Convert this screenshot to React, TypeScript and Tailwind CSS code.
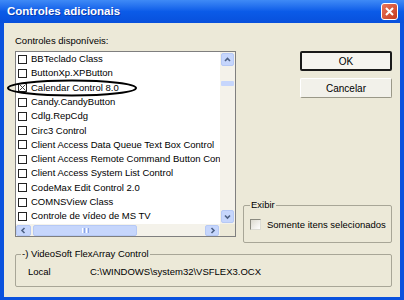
import { useState } from 'react';

const controls = [
  'BBTeclado Class',
  'ButtonXp.XPButton',
  'Calendar Control 8.0',
  'Candy.CandyButton',
  'Cdlg.RepCdg',
  'Circ3 Control',
  'Client Access Data Queue Text Box Control',
  'Client Access Remote Command Button Control',
  'Client Access System List Control',
  'CodeMax Edit Control 2.0',
  'COMNSView Class',
  'Controle de vídeo de MS TV',
];

function ListCheck({ checked }: { checked: boolean }) {
  return (
    <span className="w-[9px] h-[9px] border border-[#222] bg-white flex-shrink-0 flex items-center justify-center">
      {checked && (
        <svg width="7" height="7" viewBox="0 0 7 7">
          <path d="M0.5 0.5 L6.5 6.5 M6.5 0.5 L0.5 6.5" stroke="#444" strokeWidth="1" />
        </svg>
      )}
    </span>
  );
}

function Chevron({ dir }: { dir: 'up' | 'down' | 'left' | 'right' }) {
  const paths = {
    up: 'M2 6 L4.5 3.5 L7 6',
    down: 'M2 3.5 L4.5 6 L7 3.5',
    left: 'M5.5 2 L3 4.5 L5.5 7',
    right: 'M3.5 2 L6 4.5 L3.5 7',
  };
  return (
    <svg width="9" height="9" viewBox="0 0 9 9">
      <path d={paths[dir]} fill="none" stroke="#4d6185" strokeWidth="1.6" />
    </svg>
  );
}

function ScrollBtn({ dir, className }: { dir: 'up' | 'down' | 'left' | 'right'; className: string }) {
  return (
    <div className={`bg-[#c6d6fc] border border-[#b6c9f5] rounded-[2px] flex items-center justify-center ${className}`}>
      <Chevron dir={dir} />
    </div>
  );
}

export default function App() {
  const [onlySelected, setOnlySelected] = useState(false);

  return (
    <div className="w-[404px] h-[300px] bg-[#0a52de] flex flex-col font-['Liberation_Sans',Arial,sans-serif] text-[9.5px] text-black select-none">
      {/* Title bar */}
      <div className="h-[23px] flex items-center pl-[7px] pr-[6px] bg-gradient-to-b from-[#3f8af6] via-[#0b5be8] to-[#0850dc]">
        <span className="text-white font-bold text-[11.5px] [text-shadow:1px_1px_0_#0a3cb0]">Controles adicionais</span>
        <div className="ml-auto w-[17px] h-[17px] rounded-[3px] border border-white bg-gradient-to-br from-[#e9745a] to-[#c63a1c] flex items-center justify-center">
          <svg width="9" height="9" viewBox="0 0 9 9">
            <path d="M1 1 L8 8 M8 1 L1 8" stroke="white" strokeWidth="2" />
          </svg>
        </div>
      </div>

      {/* Dialog body */}
      <div className="flex-1 mx-[4px] mb-[3px] bg-[#ece9d8] pl-[11px] pr-[8px] pt-[11px] flex flex-col">
        <div className="flex relative">
          {/* Left: available controls */}
          <div className="w-[221px] flex flex-col">
            <div className="h-[14px] leading-[14px]">Controles disponíveis:</div>
            <div className="mt-[3px] h-[186px] border border-[#7f7f7f] bg-white flex flex-col">
              <div className="h-[172px] flex">
                <div className="flex-1 overflow-hidden">
                  {controls.map((name, i) => (
                    <div key={i} className="h-[14.3px] flex items-center gap-[4px] pl-[2px] whitespace-nowrap">
                      <ListCheck checked={i === 2} />
                      <span>{name}</span>
                    </div>
                  ))}
                </div>
                <div className="w-[15px] bg-[#f4f2ea] flex flex-col items-center pt-[1px] pb-[1px]">
                  <ScrollBtn dir="up" className="w-[13px] h-[13px]" />
                  <div className="mt-[15px] w-[13px] h-[5px] bg-[#c6d6fc] rounded-[1px]" />
                  <ScrollBtn dir="down" className="mt-auto w-[13px] h-[13px]" />
                </div>
              </div>
              <div className="flex-1 flex">
                <div className="flex-1 flex items-center bg-[#f4f2ea]">
                  <ScrollBtn dir="left" className="w-[15px] h-[11px]" />
                  <div className="ml-[2px] w-[104px] h-[11px] bg-[#c6d6fc] rounded-[2px] border border-[#b6c9f5] flex items-center justify-center gap-[1px]">
                    <span className="w-[1px] h-[5px] bg-white" />
                    <span className="w-[1px] h-[5px] bg-[#8aa4e8]" />
                    <span className="w-[1px] h-[5px] bg-white" />
                    <span className="w-[1px] h-[5px] bg-[#8aa4e8]" />
                  </div>
                  <ScrollBtn dir="right" className="ml-auto mr-[1px] w-[14px] h-[11px]" />
                </div>
                <div className="w-[15px] bg-[#ece9d8]" />
              </div>
            </div>
          </div>

          {/* Right: buttons and filter */}
          <div className="flex-1 ml-[7px] flex flex-col">
            <button className="self-end mt-[17px] w-[92px] h-[20px] border-2 border-[#1a1a1a] bg-[#f5f4ef] rounded-[2px] text-[10px]">
              OK
            </button>
            <button className="self-end mt-[7px] w-[92px] h-[20px] border border-white border-r-[#9a9888] border-b-[#9a9888] bg-[#f2f1ea] rounded-[2px] text-[10px]">
              Cancelar
            </button>
            <div className="relative mt-[107px] h-[38px] border border-[#a8a697] rounded-[2px] pl-[6px] pt-[13px] flex items-start">
              <span className="absolute -top-[7px] left-[6px] px-[1px] bg-[#ece9d8] leading-[12px]">Exibir</span>
              <label className="flex items-center gap-[6px]">
                <input
                  type="checkbox"
                  checked={onlySelected}
                  onChange={(e) => setOnlySelected(e.target.checked)}
                  className="appearance-none w-[11px] h-[11px] border border-[#dcdcd4] border-t-[#8a8a80] border-l-[#8a8a80] bg-gradient-to-br from-[#dcdad0] to-white"
                />
                <span className="leading-[11px]">Somente itens selecionados</span>
              </label>
            </div>
          </div>

          {/* Hand-drawn ellipse highlight */}
          <svg className="absolute left-[-9px] top-[45px] pointer-events-none" width="132" height="18" viewBox="0 0 132 18">
            <ellipse cx="66" cy="9" rx="64" ry="7.5" fill="none" stroke="black" strokeWidth="2" />
          </svg>
        </div>

        {/* Selected control details */}
        <div className="relative mt-[11px] h-[33px] border border-[#a8a697] rounded-[2px] pl-[12px] pt-[10px] flex">
          <span className="absolute -top-[7px] left-[5px] px-[1px] bg-[#ece9d8] leading-[12px]">-) VideoSoft FlexArray Control</span>
          <span className="w-[62px] leading-[14px]">Local</span>
          <span className="leading-[14px]">C:\WINDOWS\system32\VSFLEX3.OCX</span>
        </div>
      </div>
    </div>
  );
}
